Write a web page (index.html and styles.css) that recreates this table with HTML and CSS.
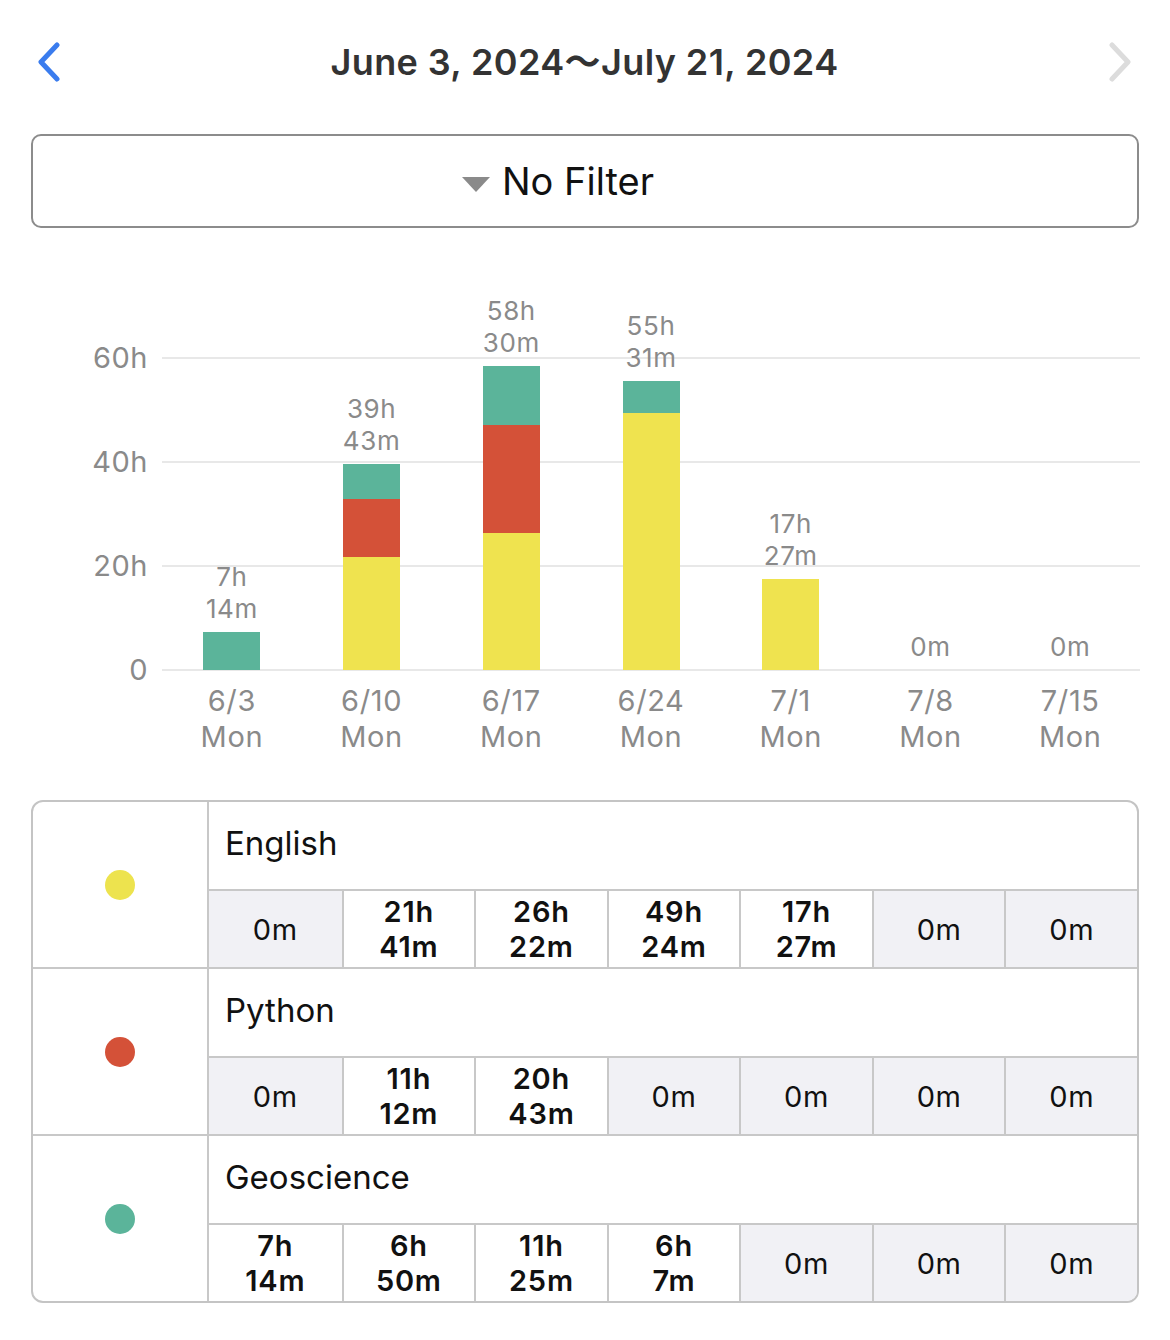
FILE: index.html
```html
<!DOCTYPE html>
<html lang="en">
<head>
<meta charset="utf-8">
<title>Weekly Report</title>
<link rel="stylesheet" href="styles.css">
</head>
<body>
<header class="header">
  <button class="nav nav-prev" aria-label="Previous">
    <svg width="30" height="40" viewBox="0 0 30 40"><path d="M22 3 L6 20 L22 37" fill="none" stroke="#3a7cee" stroke-width="5" stroke-linecap="round" stroke-linejoin="round"/></svg>
  </button>
  <h1 class="title">June 3, 2024～July 21, 2024</h1>
  <button class="nav nav-next" aria-label="Next">
    <svg width="30" height="40" viewBox="0 0 30 40"><path d="M8 3 L24 20 L8 37" fill="none" stroke="#dcdcdc" stroke-width="5" stroke-linecap="round" stroke-linejoin="round"/></svg>
  </button>
</header>

<div class="filter"><span class="tri"></span><span class="filter-text">No Filter</span></div>

<section class="chart">
  <div class="plot">
    <div class="gridlayer">
      <div class="gl"><span class="yl">60h</span><span class="line"></span></div>
      <div class="gl"><span class="yl">40h</span><span class="line"></span></div>
      <div class="gl"><span class="yl">20h</span><span class="line"></span></div>
      <div class="gl"><span class="yl">0</span><span class="line"></span></div>
    </div>
    <div class="bars">
      <div class="col"><div class="val">7h<br>14m</div><div class="stack"><div class="seg geo" style="height:37.6px"></div></div></div>
      <div class="col"><div class="val">39h<br>43m</div><div class="stack"><div class="seg geo" style="height:35.5px"></div><div class="seg py" style="height:58.2px"></div><div class="seg en" style="height:112.8px"></div></div></div>
      <div class="col"><div class="val">58h<br>30m</div><div class="stack"><div class="seg geo" style="height:59.4px"></div><div class="seg py" style="height:107.7px"></div><div class="seg en" style="height:137.1px"></div></div></div>
      <div class="col"><div class="val">55h<br>31m</div><div class="stack"><div class="seg geo" style="height:31.8px"></div><div class="seg en" style="height:256.9px"></div></div></div>
      <div class="col"><div class="val">17h<br>27m</div><div class="stack"><div class="seg en" style="height:90.7px"></div></div></div>
      <div class="col"><div class="val">0m</div><div class="stack"></div></div>
      <div class="col"><div class="val">0m</div><div class="stack"></div></div>
    </div>
  </div>
  <div class="xlabels">
    <div class="xl">6/3<br>Mon</div>
    <div class="xl">6/10<br>Mon</div>
    <div class="xl">6/17<br>Mon</div>
    <div class="xl">6/24<br>Mon</div>
    <div class="xl">7/1<br>Mon</div>
    <div class="xl">7/8<br>Mon</div>
    <div class="xl">7/15<br>Mon</div>
  </div>
</section>

<section class="table">
  <div class="row">
    <div class="dotcell"><span class="dot en"></span></div>
    <div class="main">
      <div class="name">English</div>
      <div class="cells">
        <div class="cell zero">0m</div>
        <div class="cell">21h<br>41m</div>
        <div class="cell">26h<br>22m</div>
        <div class="cell">49h<br>24m</div>
        <div class="cell">17h<br>27m</div>
        <div class="cell zero">0m</div>
        <div class="cell zero">0m</div>
      </div>
    </div>
  </div>
  <div class="row">
    <div class="dotcell"><span class="dot py"></span></div>
    <div class="main">
      <div class="name">Python</div>
      <div class="cells">
        <div class="cell zero">0m</div>
        <div class="cell">11h<br>12m</div>
        <div class="cell">20h<br>43m</div>
        <div class="cell zero">0m</div>
        <div class="cell zero">0m</div>
        <div class="cell zero">0m</div>
        <div class="cell zero">0m</div>
      </div>
    </div>
  </div>
  <div class="row">
    <div class="dotcell"><span class="dot geo"></span></div>
    <div class="main">
      <div class="name">Geoscience</div>
      <div class="cells">
        <div class="cell">7h<br>14m</div>
        <div class="cell">6h<br>50m</div>
        <div class="cell">11h<br>25m</div>
        <div class="cell">6h<br>7m</div>
        <div class="cell zero">0m</div>
        <div class="cell zero">0m</div>
        <div class="cell zero">0m</div>
      </div>
    </div>
  </div>
</section>
</body>
</html>
```

FILE: styles.css
```css
* { box-sizing: border-box; }
html, body { margin: 0; padding: 0; background: #ffffff; }
body {
  width: 1170px;
  font-family: Inter, "Noto Sans", "Noto Sans CJK JP", sans-serif;
  color: #111;
}

/* header */
.header {
  display: flex;
  align-items: center;
  justify-content: space-between;
  height: 44px;
  margin-top: 40px;
  padding: 0 36px 0 35px;
}
.nav {
  width: 30px;
  height: 40px;
  padding: 0;
  border: 0;
  background: none;
  display: flex;
}
.title {
  margin: -6px 0 0;
  font-size: 36px;
  font-weight: 600;
  color: #333;
  font-family: Inter, "Noto Sans CJK JP", sans-serif;
  letter-spacing: 0.4px;
}

/* filter */
.filter {
  margin: 50px 31px 0;
  height: 94px;
  padding-right: 54px;
  border: 2px solid #8c8c8c;
  border-radius: 10px;
  display: flex;
  align-items: center;
  justify-content: center;
  gap: 12px;
}
.tri {
  width: 0;
  height: 0;
  border-left: 14px solid transparent;
  border-right: 14px solid transparent;
  border-top: 15px solid #8a8a8a;
  margin-top: 6px;
}
.filter-text {
  font-size: 38px;
  color: #111;
}

/* chart */
.chart { margin: 0; }
.plot {
  display: grid;
  height: 385px;
  margin: 58px 30px 0 0;
}
.gridlayer {
  grid-area: 1 / 1;
  align-self: end;
  display: flex;
  flex-direction: column;
  gap: 102px;
}
.gl {
  height: 2px;
  display: flex;
  align-items: center;
}
.yl {
  flex: none;
  width: 148px;
  margin-right: 14px;
  text-align: right;
  font-size: 29px;
  letter-spacing: 0.5px;
  line-height: 32px;
  color: #8a8a8a;
}
.line {
  flex: 1;
  height: 2px;
  background: #e8e8e8;
}
.bars {
  grid-area: 1 / 1;
  align-self: end;
  margin: 0 0 1px 162px;
  display: flex;
  align-items: flex-end;
}
.col {
  flex: 1;
  display: flex;
  flex-direction: column;
  align-items: center;
}
.val {
  font-size: 26px;
  letter-spacing: 0.6px;
  line-height: 32px;
  color: #8a8a8a;
  text-align: center;
  margin-bottom: 7px;
}
.stack {
  width: 57px;
  display: flex;
  flex-direction: column;
}
.seg.geo { background: #5bb49a; }
.seg.py { background: #d45138; }
.seg.en { background: #efe34f; }

.xlabels {
  display: flex;
  margin: 12px 30px 0 162px;
}
.xl {
  flex: 1;
  text-align: center;
  font-size: 29px;
  letter-spacing: 0.6px;
  line-height: 36px;
  color: #8a8a8a;
}

/* table */
.table {
  margin: 45px 31px 0;
  border: 2px solid #c4c4c4;
  border-radius: 12px;
  overflow: hidden;
}
.row {
  display: flex;
  border-bottom: 2px solid #c8c8c8;
}
.row:last-child { border-bottom: 0; }
.dotcell {
  flex: none;
  width: 176px;
  border-right: 2px solid #c8c8c8;
  display: flex;
  align-items: center;
  justify-content: center;
}
.dot {
  width: 30px;
  height: 30px;
  border-radius: 50%;
}
.dot.en { background: #ede34e; }
.dot.py { background: #d45138; }
.dot.geo { background: #5bb49a; }
.main { flex: 1; }
.name {
  height: 87px;
  padding: 0 0 5px 16px;
  display: flex;
  align-items: center;
  font-size: 33px;
  color: #111;
}
.cells {
  display: grid;
  grid-template-columns: repeat(7, 1fr);
  border-top: 2px solid #c8c8c8;
}
.cell {
  height: 76px;
  display: flex;
  align-items: center;
  justify-content: center;
  text-align: center;
  font-size: 29px;
  letter-spacing: 0.8px;
  line-height: 35px;
  font-weight: 600;
  color: #111;
  border-left: 2px solid #c8c8c8;
}
.cell:first-child { border-left: 0; }
.cell.zero {
  background: #f1f1f5;
  font-weight: 400;
  letter-spacing: 0.6px;
}
```
